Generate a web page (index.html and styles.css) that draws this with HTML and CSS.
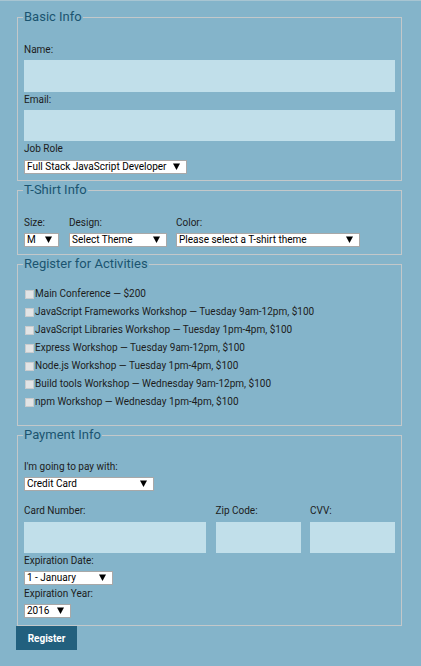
FILE: index.html
```html
<!DOCTYPE html>
<html lang="en">
<head>
<meta charset="utf-8">
<title>Register</title>
<link rel="stylesheet" href="styles.css">
</head>
<body>
<div class="topline"></div>
<form class="form">
  <fieldset class="box basic">
    <legend class="legend">Basic Info</legend>
    <label class="lbl first" for="name">Name:</label>
    <input class="field" id="name" type="text">
    <label class="lbl" for="mail">Email:</label>
    <input class="field" id="mail" type="email">
    <label class="lbl role" for="title">Job Role</label>
    <span class="sel w-role"><select id="title"><option>Full Stack JavaScript Developer</option></select><svg class="arrow" viewBox="0 0 8 8"><polygon points="0,0.5 8,0.5 4,8"/></svg></span>
  </fieldset>

  <fieldset class="box shirt">
    <legend class="legend">T-Shirt Info</legend>
    <div class="shirt-row">
      <div class="col c-size">
        <label class="lbl" for="size">Size:</label>
        <span class="sel w-size"><select id="size"><option>M</option></select><svg class="arrow" viewBox="0 0 8 8"><polygon points="0,0.5 8,0.5 4,8"/></svg></span>
      </div>
      <div class="col c-design">
        <label class="lbl" for="design">Design:</label>
        <span class="sel w-design"><select id="design"><option>Select Theme</option></select><svg class="arrow" viewBox="0 0 8 8"><polygon points="0,0.5 8,0.5 4,8"/></svg></span>
      </div>
      <div class="col c-color">
        <label class="lbl" for="color">Color:</label>
        <span class="sel w-color"><select id="color"><option>Please select a T-shirt theme</option></select><svg class="arrow" viewBox="0 0 8 8"><polygon points="0,0.5 8,0.5 4,8"/></svg></span>
      </div>
    </div>
  </fieldset>

  <fieldset class="box acts">
    <legend class="legend">Register for Activities</legend>
    <label class="act"><input type="checkbox" class="cb">Main Conference — $200</label>
    <label class="act"><input type="checkbox" class="cb">JavaScript Frameworks Workshop — Tuesday 9am-12pm, $100</label>
    <label class="act"><input type="checkbox" class="cb">JavaScript Libraries Workshop — Tuesday 1pm-4pm, $100</label>
    <label class="act"><input type="checkbox" class="cb">Express Workshop — Tuesday 9am-12pm, $100</label>
    <label class="act"><input type="checkbox" class="cb">Node.js Workshop — Tuesday 1pm-4pm, $100</label>
    <label class="act"><input type="checkbox" class="cb">Build tools Workshop — Wednesday 9am-12pm, $100</label>
    <label class="act"><input type="checkbox" class="cb">npm Workshop — Wednesday 1pm-4pm, $100</label>
  </fieldset>

  <fieldset class="box pay">
    <legend class="legend">Payment Info</legend>
    <label class="lbl" for="payment">I'm going to pay with:</label>
    <span class="sel w-pay"><select id="payment"><option>Credit Card</option></select><svg class="arrow" viewBox="0 0 8 8"><polygon points="0,0.5 8,0.5 4,8"/></svg></span>
    <div class="card-grid">
      <div class="cell">
        <label class="lbl" for="cc-num">Card Number:</label>
        <input class="field" id="cc-num" type="text">
      </div>
      <div class="cell">
        <label class="lbl" for="zip">Zip Code:</label>
        <input class="field" id="zip" type="text">
      </div>
      <div class="cell">
        <label class="lbl" for="cvv">CVV:</label>
        <input class="field" id="cvv" type="text">
      </div>
    </div>
    <label class="lbl exp" for="exp-month">Expiration Date:</label>
    <span class="sel w-month"><select id="exp-month"><option>1 - January</option></select><svg class="arrow" viewBox="0 0 8 8"><polygon points="0,0.5 8,0.5 4,8"/></svg></span>
    <label class="lbl exp year" for="exp-year">Expiration Year:</label>
    <span class="sel w-year"><select id="exp-year"><option>2016</option></select><svg class="arrow" viewBox="0 0 8 8"><polygon points="0,0.5 8,0.5 4,8"/></svg></span>
  </fieldset>

  <button class="submit" type="submit">Register</button>
</form>
</body>
</html>
```

FILE: styles.css
```css
html, body {
  margin: 0;
  padding: 0;
  background: #84b4ca;
  font-family: Roboto, "Liberation Sans", sans-serif;
  font-size: 10px;
  color: #1c1c1c;
}

.topline {
  height: 1px;
  background: #a8c5d2;
}

.form {
  padding: 7px 0 0 16px;
}

.box {
  width: 385px;
  box-sizing: border-box;
  margin: 0 0 0 1px;
  padding: 0 6px;
  border: 1px solid #c3c8ca;
  min-width: 0;
}

.legend {
  font-size: 13px;
  line-height: 18px;
  height: 18px;
  color: #1b5470;
  padding: 0 1px;
  margin-left: -1px;
}

.lbl {
  display: block;
  line-height: 14px;
  height: 14px;
  white-space: nowrap;
}

.field {
  display: block;
  width: 100%;
  box-sizing: border-box;
  height: 31.5px;
  margin: 3px 0 1px;
  border: 0;
  padding: 0 6px;
  background: #c1dfea;
  font: inherit;
}

/* Basic info */
.basic {
  padding-bottom: 6px;
}
.basic .first {
  margin-top: 17px;
}
.basic .role {
  margin-top: 1px;
}
.basic .role + .sel {
  margin-top: 4px;
}

/* select */
.sel {
  position: relative;
  display: block;
  height: 14px;
  box-sizing: border-box;
  margin-top: 3px;
}
.sel select {
  appearance: none;
  -webkit-appearance: none;
  display: block;
  width: 100%;
  height: 14px;
  box-sizing: border-box;
  margin: 0;
  border: 1px solid #a8a8a8;
  border-radius: 0;
  background: #fff;
  color: #000;
  font-family: Roboto, "Liberation Sans", sans-serif;
  font-size: 10px;
  line-height: 12px;
  padding: 0 0 0 2px;
}
.arrow {
  position: absolute;
  right: 7px;
  top: 3px;
  width: 7px;
  height: 7px;
  fill: #000;
  pointer-events: none;
}
.w-role { width: 163px; }
.w-size { width: 35px; }
.w-design { width: 98px; }
.w-color { width: 184px; }
.w-pay { width: 130px; }
.w-month { width: 89px; }
.w-year { width: 47px; }

/* T-shirt */
.shirt {
  padding-bottom: 7px;
}
.shirt-row {
  display: flex;
  margin-top: 17px;
}
.c-size { width: 45px; }
.c-design { width: 107px; }

/* Activities */
.acts {
  padding-top: 12px;
  padding-bottom: 14px;
}
.act {
  display: flex;
  align-items: center;
  height: 18px;
  line-height: 18px;
  white-space: nowrap;
}
.cb {
  appearance: none;
  -webkit-appearance: none;
  width: 9px;
  height: 9px;
  margin: 0 1px 0 1px;
  box-sizing: border-box;
  border: 1px solid #c9ccce;
  background: #e2e4e5;
  flex: none;
}

/* Payment */
.pay {
  padding-bottom: 7px;
}
.pay > .lbl:first-of-type {
  margin-top: 16px;
}
.card-grid {
  display: grid;
  grid-template-columns: 182px 85px 85px;
  column-gap: 9.5px;
  margin-top: 13px;
}
.card-grid .field {
  margin: 4px 0 0;
  height: 31px;
}
.pay .exp {
  margin-top: 1px;
}
.pay .year {
  margin-top: 2px;
}

.submit {
  display: block;
  width: 61px;
  height: 24px;
  margin: 0;
  padding: 0;
  border: 0;
  background: #22607e;
  color: #fff;
  font-family: Roboto, "Liberation Sans", sans-serif;
  font-size: 10px;
  font-weight: 700;
}
```
